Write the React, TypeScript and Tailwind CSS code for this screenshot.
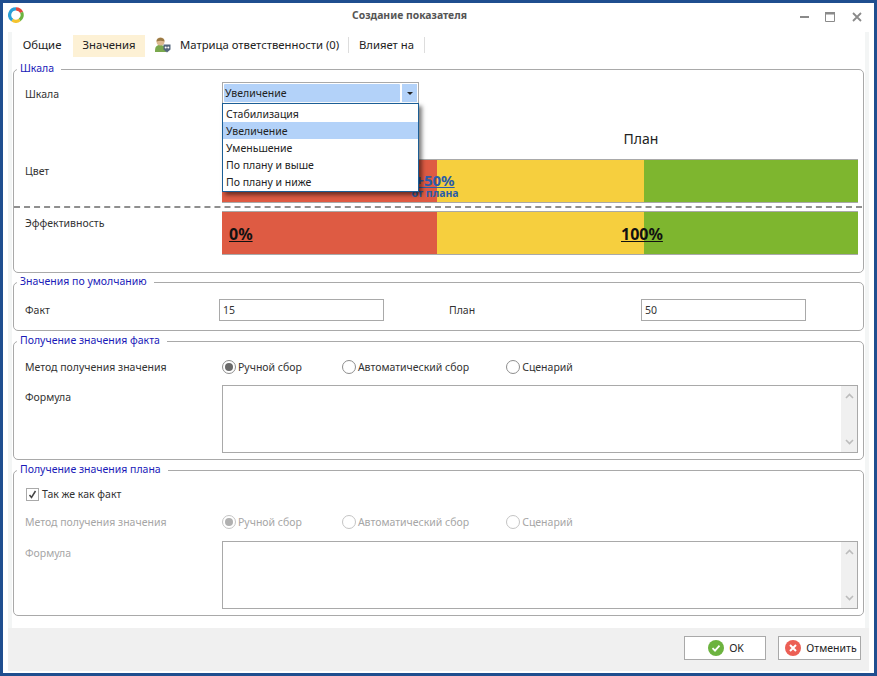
import React from "react";

const font = "font-['Noto_Sans',sans-serif]";

function Section({ title, className, children }: { title: string; className: string; children: React.ReactNode }) {
  return (
    <fieldset className={`mx-[1px] rounded-[5px] border border-[#a9a9a9] pl-[11px] ${className}`}>
      <legend className="-ml-[8px] pb-[2px] pl-[3px] pr-[7px] text-[10.5px] leading-[12px] text-[#1a1ab8]">{title}</legend>
      {children}
    </fieldset>
  );
}

function Radio({ label, checked, disabled, className = "" }: { label: string; checked?: boolean; disabled?: boolean; className?: string }) {
  return (
    <div className={`flex items-center gap-[2px] ${className}`}>
      <span className={`flex h-[14px] w-[14px] items-center justify-center rounded-full border ${disabled ? "border-[#c4c4c4]" : "border-[#8e8e8e]"} bg-white`}>
        {checked && <span className={`h-[8px] w-[8px] rounded-full ${disabled ? "bg-[#b0b0b0]" : "bg-[#6a6a6a]"}`} />}
      </span>
      <span className={disabled ? "text-[#a6a6a6]" : "text-[#333]"}>{label}</span>
    </div>
  );
}

function Memo() {
  return (
    <div className="flex h-[68px] w-[636px] justify-end border border-[#a9a9a9] bg-white">
      <div className="flex w-[16px] flex-col items-center justify-between bg-[#f0f0f0] py-[7px]">
        <svg width="9" height="6" viewBox="0 0 9 6"><path d="M1 5l3.500-3.500L8 5" fill="none" stroke="#bcbcbc" strokeWidth="1.600" /></svg>
        <svg width="9" height="6" viewBox="0 0 9 6"><path d="M1 1l3.500 3.500L8 1" fill="none" stroke="#bcbcbc" strokeWidth="1.600" /></svg>
      </div>
    </div>
  );
}

function Bar({ children }: { children?: React.ReactNode }) {
  return (
    <div className="relative flex h-[44px] w-[636px] border-y border-[#a9a9a9] text-[16px]">
      <div className="w-[215px] bg-[#de5b43]" />
      <div className="w-[207px] bg-[#f6cf3e]" />
      <div className="flex-1 bg-[#7eb62f]" />
      {children}
    </div>
  );
}

function Logo() {
  return (
    <svg className="mt-[4px]" width="16" height="16" viewBox="0 0 16 16" fill="none" strokeWidth="3.200">
      <path d="M8 1.800a6.200 6.200 0 0 1 5.600 3.600" stroke="#e2483d" />
      <path d="M13.600 5.400a6.200 6.200 0 0 1-2 7.600" stroke="#6cb33f" />
      <path d="M11.600 13a6.200 6.200 0 0 1-7.400 0" stroke="#f4c430" />
      <path d="M4.200 13A6.200 6.200 0 0 1 8 1.800" stroke="#2a9fd6" />
    </svg>
  );
}

export default function App() {
  return (
    <div className={`flex h-[676px] w-[877px] flex-col border-[3px] border-[#1f4e8f] bg-white text-[10.5px] leading-[14px] text-[#333] ${font}`}>
      <header className="flex h-[29px] shrink-0 items-start pl-[5px] pr-[12px]">
        <Logo />
        <div className="mt-[5px] flex-1 pr-[5px] text-center text-[10.4px] font-bold text-[#555]">Создание показателя</div>
        <div className="mt-[9px] flex items-center">
          <svg width="10" height="10" viewBox="0 0 10 10"><rect x="0" y="4" width="9" height="2" fill="#8a8a8a" /></svg>
          <svg className="ml-[15px]" width="10" height="10" viewBox="0 0 10 10"><path d="M.5.500h9v9h-9z" fill="none" stroke="#8a8a8a" /><rect y="0" width="10" height="2.500" fill="#8a8a8a" /></svg>
          <svg className="ml-[17px]" width="10" height="10" viewBox="0 0 10 10"><path d="M1 1l8 8M9 1l-8 8" stroke="#8a8a8a" strokeWidth="1.800" /></svg>
        </div>
      </header>

      <div className="mx-[5px] flex flex-1 flex-col border-x-[4px] border-[#f3f5f5]">
        <div className="flex h-[30px] shrink-0 items-start pl-[10px] pt-[3px] text-[11.3px] text-[#222]">
          <span className="flex h-[22px] w-[40px] items-center justify-center pb-[2px]">Общие</span>
          <span className="ml-[11px] flex h-[22px] w-[72px] items-center justify-center bg-[#fdf1d5] pb-[2px]">Значения</span>
          <svg className="ml-[9px] mt-[1px]" width="17" height="17" viewBox="0 0 17 17">
            <path d="M1 16c0-5 1-7 5-7s6 2 6 7z" fill="#7aa84d" />
            <circle cx="6.500" cy="5.500" r="4" fill="#dcb98f" />
            <path d="M2.500 5.500c0-5 8-5 8 0-3-1-5-1-8 0z" fill="#9a7a45" />
            <path d="M9.500 8.500h7v5l-3.500 3-3.500-3z" fill="#54667c" />
            <circle cx="11.700" cy="11.500" r="1" fill="#fff" /><circle cx="14.300" cy="11.500" r="1" fill="#fff" />
          </svg>
          <span className="ml-[9px] flex h-[22px] w-[159px] items-center whitespace-nowrap pb-[2px]">Матрица ответственности (0)</span>
          <span className="ml-[9px] mt-[2px] h-[16px] w-px bg-[#ddd]" />
          <span className="ml-[10px] flex h-[22px] w-[54px] items-center whitespace-nowrap pb-[2px]">Влияет на</span>
          <span className="ml-[11px] mt-[2px] h-[16px] w-px bg-[#ddd]" />
        </div>

        <Section title="Шкала" className="relative h-[211px]">
          <div className="flex pt-[6px]">
            <span className="mt-[5px] w-[197px]">Шкала</span>
            <div className="flex h-[22px] w-[197px] items-center gap-[2px] border border-[#a9a9a9] p-[1px]">
              <span className="flex h-full flex-1 items-center rounded-[1px] bg-[#b3d2f9] pl-[1px] text-[#222]">Увеличение</span>
              <span className="flex h-full w-[15px] items-center justify-center bg-[#b3d2f9]">
                <svg width="6" height="3" viewBox="0 0 6 3"><path d="M0 0h6L3 3z" fill="#222" /></svg>
              </span>
            </div>
          </div>
          <div className="flex h-[55px] w-[833px] items-end justify-end">
            <span className="w-[434px] pb-[10px] text-center text-[14px] leading-[20px] text-[#222]">План</span>
          </div>
          <div className="flex">
            <span className="mt-[5px] w-[197px]">Цвет</span>
            <Bar>
              <div className="absolute left-[188px] top-[11px] w-[50px] text-center text-[15px] font-bold leading-[18px] text-[#2c5da8] underline">+50%</div>
              <div className="absolute left-[186px] top-[27px] w-[54px] whitespace-nowrap text-center text-[10.5px] font-bold leading-[12px] text-[#2c5da8]">от плана</div>
            </Bar>
          </div>
          <div className="my-[3px] -ml-[11px] w-[848px] border-t-2 border-dashed border-[#8f8f8f]" />
          <div className="flex">
            <span className="mt-[5px] w-[197px]">Эффективность</span>
            <Bar>
              <div className="absolute left-[7px] top-[13px] font-bold leading-[18px] text-[#111] underline">0%</div>
              <div className="absolute left-[399px] top-[13px] font-bold leading-[18px] text-[#111] underline">100%</div>
            </Bar>
          </div>
          <ul className="absolute left-[208px] top-[27px] w-[197px] border border-[#1b5e96] bg-white py-[1px] text-[#222] shadow-[3px_3px_4px_rgba(0,0,0,0.5)]">
            {["Стабилизация", "Увеличение", "Уменьшение", "По плану и выше", "По плану и ниже"].map((t) => (
              <li key={t} className={`flex h-[17px] items-center pl-[3px] ${t === "Увеличение" ? "bg-[#b3d2f9]" : ""}`}>{t}</li>
            ))}
          </ul>
        </Section>

        <Section title="Значения по умолчанию" className="mt-[2px] h-[56px]">
          <div className="flex items-center pr-[57px] pt-[10px]">
            <span className="w-[194px]">Факт</span>
            <input readOnly value="15" className="h-[22px] w-[165px] border border-[#a9a9a9] px-[3px] outline-none" />
            <span className="ml-[65px] flex-1">План</span>
            <input readOnly value="50" className="h-[22px] w-[165px] border border-[#a9a9a9] px-[3px] outline-none" />
          </div>
        </Section>

        <Section title="Получение значения факта" className="mt-[3px] h-[126px]">
          <div className="flex items-center pt-[12px]">
            <span className="w-[197px]">Метод получения значения</span>
            <Radio label="Ручной сбор" checked />
            <Radio label="Автоматический сбор" className="ml-[40px]" />
            <Radio label="Сценарий" className="ml-[37px]" />
          </div>
          <div className="flex pt-[11px]">
            <span className="mt-[5px] w-[197px]">Формула</span>
            <Memo />
          </div>
        </Section>

        <Section title="Получение значения плана" className="mt-[3px] h-[153px]">
          <div className="ml-[1px] flex items-center gap-[3px] pt-[10px]">
            <span className="flex h-[13px] w-[13px] items-center justify-center border border-[#a9a9a9]">
              <svg width="9" height="9" viewBox="0 0 9 9"><path d="M1.500 5l2 2.500L7.500 1" fill="none" stroke="#444" strokeWidth="1.500" /></svg>
            </span>
            <span>Так же как факт</span>
          </div>
          <div className="flex items-center pt-[14px] text-[#a6a6a6]">
            <span className="w-[197px]">Метод получения значения</span>
            <Radio label="Ручной сбор" checked disabled />
            <Radio label="Автоматический сбор" className="ml-[40px]" disabled />
            <Radio label="Сценарий" className="ml-[37px]" disabled />
          </div>
          <div className="flex pt-[12px] text-[#a6a6a6]">
            <span className="mt-[5px] w-[197px]">Формула</span>
            <Memo />
          </div>
        </Section>
      </div>

      <footer className="mx-[5px] mb-[2px] flex h-[43px] shrink-0 items-start justify-end gap-[12px] bg-[#f0f0f0] pr-[8px] pt-[8px] text-[#222]">
        <button className="flex h-[24px] w-[82px] items-center justify-center gap-[5px] border border-[#a9a9a9] bg-white pl-[2px]">
          <svg width="16" height="16" viewBox="0 0 16 16"><circle cx="8" cy="8" r="8" fill="#6cb33f" /><path d="M4.500 8.200l2.500 2.500 4.500-5" fill="none" stroke="#fff" strokeWidth="1.800" /></svg>
          OK
        </button>
        <button className="flex h-[24px] w-[83px] items-center justify-center gap-[5px] border border-[#a9a9a9] bg-white pl-[3px]">
          <svg width="16" height="16" viewBox="0 0 16 16"><circle cx="8" cy="8" r="8" fill="#ec5f55" /><path d="M5 5l6 6M11 5l-6 6" stroke="#fff" strokeWidth="2" /></svg>
          Отменить
        </button>
      </footer>
    </div>
  );
}
